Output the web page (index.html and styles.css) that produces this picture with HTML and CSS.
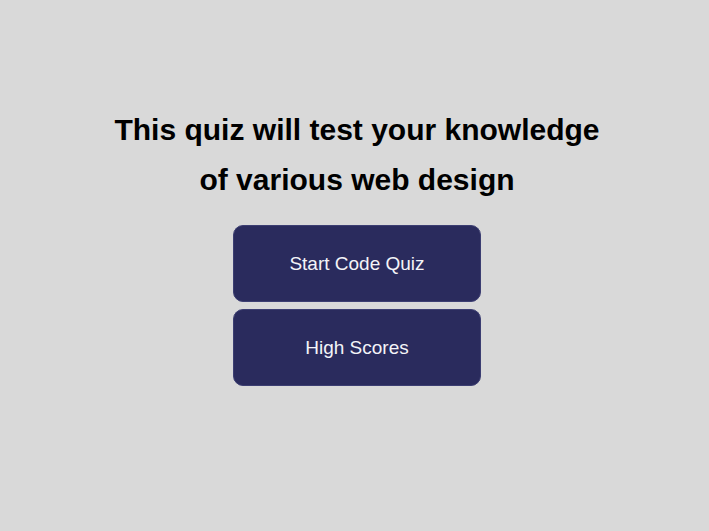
FILE: index.html
```html
<!DOCTYPE html>
<html>
<head>
<meta charset="utf-8">
<link rel="stylesheet" href="styles.css">
</head>
<body>
<main class="intro">
  <h1 class="title">This quiz will test your knowledge<br>of various web design</h1>
  <div class="actions">
    <button class="btn">Start Code Quiz</button>
    <button class="btn">High Scores</button>
  </div>
</main>
</body>
</html>
```
FILE: styles.css
```css
html, body {
  margin: 0;
  padding: 0;
  background: #d9d9d9;
  font-family: "Liberation Sans", Arial, sans-serif;
}
.intro {
  padding-top: 105px;
  padding-left: 5px;
  display: flex;
  flex-direction: column;
  align-items: center;
}
.title {
  margin: 0;
  font-size: 30px;
  line-height: 50px;
  font-weight: bold;
  text-align: center;
  color: #000;
}
.actions {
  margin-top: 20px;
  display: flex;
  flex-direction: column;
  gap: 7px;
}
.btn {
  width: 248px;
  height: 77px;
  background: #2a2b5d;
  color: #f4f4f8;
  border: 1px solid #3c3e72;
  border-radius: 10px;
  font-family: "Liberation Sans", Arial, sans-serif;
  font-size: 19px;
  padding: 0;
}
```
